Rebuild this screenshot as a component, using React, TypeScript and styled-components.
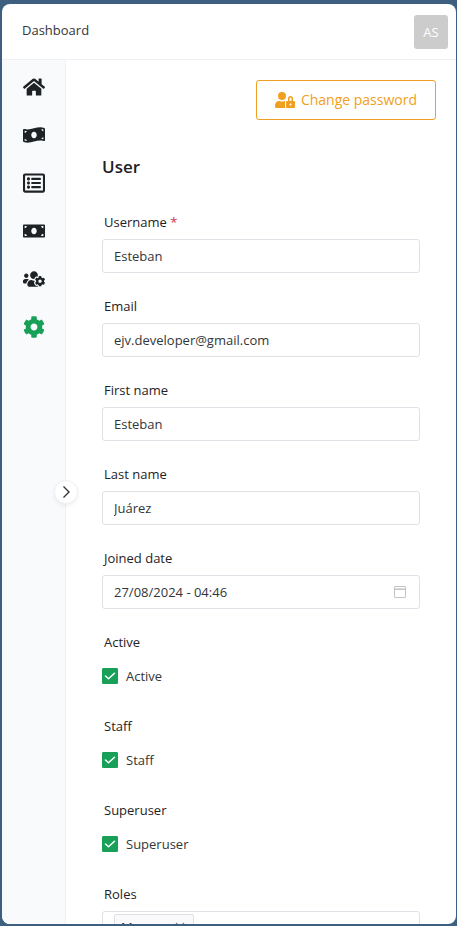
import React, { useId, useState } from 'react';
import styled, { createGlobalStyle, css } from 'styled-components';
import {
  FaCog,
  FaHome,
  FaMoneyBill,
  FaMoneyBillWave,
  FaRegListAlt,
  FaUserLock,
  FaUsersCog,
} from 'react-icons/fa';

const GlobalStyle = createGlobalStyle`
  *, *::before, *::after { box-sizing: border-box; }
  html, body, #root { height: 100%; }
  body {
    margin: 0;
    background: #3d6080;
    color: #1f2225;
    font-family: "Open Sans", "Noto Sans", sans-serif;
    font-size: 13px;
    line-height: 20px;
  }
  button, input { font: inherit; color: inherit; }
`;

const Backdrop = styled.div`
  height: 100vh;
  padding: 4px 1px 2px 2px;
`;

const Window = styled.div`
  display: flex;
  flex-direction: column;
  height: 100%;
  overflow: hidden;
  border-radius: 8px;
  background: #fff;
`;

const Header = styled.header`
  display: flex;
  flex: none;
  align-items: center;
  justify-content: space-between;
  height: 56px;
  padding: 0 8px 0 20px;
  border-bottom: 1px solid #efeff5;
`;

const Crumb = styled.a`
  margin-bottom: 4px;
  color: #333639;
  text-decoration: none;
`;

const Avatar = styled.button`
  width: 34px;
  height: 34px;
  padding: 0;
  border: 0;
  border-radius: 3px;
  background: #ccc;
  color: #fff;
`;

const Body = styled.div`
  display: flex;
  flex: 1;
  min-height: 0;
`;

const Sidebar = styled.aside`
  position: relative;
  flex: none;
  width: 64px;
  border-right: 1px solid #efeff5;
  background: #f8fafc;
`;

const Menu = styled.nav`
  display: flex;
  flex-direction: column;
  padding-top: 3px;
`;

const MenuLink = styled.a<{ $active?: boolean }>`
  display: flex;
  align-items: center;
  justify-content: center;
  height: 48px;
  color: ${({ $active }) => ($active ? '#18a058' : '#1f2225')};
  font-size: 22px;
`;

const CollapseToggle = styled.button`
  position: absolute;
  top: 50%;
  right: -1px;
  display: flex;
  align-items: center;
  justify-content: center;
  width: 24px;
  height: 24px;
  padding: 0;
  border: 1px solid #efeff5;
  border-radius: 50%;
  background: #fff;
  color: #333639;
  box-shadow: 0 2px 4px rgba(0, 0, 0, 0.06);
  transform: translate(50%, -50%);
`;

const Main = styled.main`
  display: flex;
  flex: 1;
  flex-direction: column;
  min-width: 0;
  padding: 20px;
  overflow: hidden;
`;

const PasswordButton = styled.button`
  display: flex;
  flex: none;
  align-items: center;
  align-self: flex-end;
  gap: 6px;
  height: 40px;
  padding: 0 18px;
  border: 1px solid #f0a020;
  border-radius: 3px;
  background: transparent;
  color: #f0a020;
  font-size: 14px;

  svg { font-size: 20px; }
`;

const Form = styled.form`
  flex: none;
  padding: 35px 16px 0;
`;

const Title = styled.h2`
  margin: 0 0 34px;
  font-size: 17px;
  font-weight: 600;
  line-height: 24px;
`;

const Field = styled.div`
  display: flex;
  flex-direction: column;
  height: 84px;
`;

const labelStyle = css`
  height: 26px;
  padding-left: 2px;
  line-height: 19px;
`;

const Label = styled.label`
  ${labelStyle}
`;

const GroupLabel = styled.div`
  ${labelStyle}
`;

const Asterisk = styled.span`
  color: #d03050;
`;

const Control = styled.div`
  display: flex;
  align-items: center;
  height: 34px;
  padding: 0 11px;
  border: 1px solid #e0e0e6;
  border-radius: 3px;
  color: #c2c2c2;
`;

const TextInput = styled.input`
  flex: 1;
  min-width: 0;
  height: 100%;
  padding: 0;
  border: 0;
  outline: 0;
  background: transparent;
  color: #333639;
`;

const CheckLabel = styled.label`
  display: flex;
  align-items: center;
  gap: 8px;
  height: 34px;
  color: #333639;
`;

const CheckBox = styled.span`
  display: grid;
  width: 16px;
  height: 16px;

  > * { grid-area: 1 / 1; }
  svg { pointer-events: none; }
`;

const CheckInput = styled.input`
  width: 16px;
  height: 16px;
  margin: 0;
  border: 1px solid #e0e0e6;
  border-radius: 1px;
  appearance: none;

  &:checked {
    border-color: #18a058;
    background: #18a058;
  }
`;

const TagBox = styled.div`
  display: flex;
  min-height: 34px;
  padding: 2px 11px;
  border: 1px solid #e0e0e6;
  border-radius: 3px;
`;

const Tag = styled.span`
  display: flex;
  align-items: center;
  justify-content: space-between;
  width: 80px;
  height: 26px;
  padding: 0 8px 0 6px;
  border: 1px solid #e0e0e6;
  border-radius: 2px;
  background: #fafafc;
  color: #333639;
`;

const TagClose = styled.button`
  display: flex;
  padding: 0;
  border: 0;
  background: transparent;
  color: #767c82;
`;

const ChevronIcon = () => (
  <svg width="14" height="14" viewBox="0 0 14 14" fill="none" stroke="currentColor" strokeWidth="1.4" aria-hidden="true">
    <path d="M4.5 1.5 10 7l-5.5 5.5" />
  </svg>
);

const CalendarIcon = () => (
  <svg width="16" height="16" viewBox="0 0 16 16" fill="none" stroke="currentColor" aria-hidden="true">
    <rect x="2.5" y="2.5" width="11" height="11" rx="0.5" />
    <path d="M2 5.2h12" strokeWidth="1.5" />
  </svg>
);

const CheckIcon = () => (
  <svg width="16" height="16" viewBox="0 0 16 16" fill="none" stroke="#fff" strokeWidth="1.5" strokeLinecap="round" strokeLinejoin="round" aria-hidden="true">
    <path d="M3.5 8 6.500 10.700l6-5.400" />
  </svg>
);

const CloseIcon = () => (
  <svg width="10" height="10" viewBox="0 0 10 10" stroke="currentColor" strokeWidth="1.2" aria-hidden="true">
    <path d="m1 1 8 8M9 1 1 9" />
  </svg>
);

interface TextFieldProps {
  label: string;
  value: string;
  type?: string;
  required?: boolean;
  suffix?: React.ReactNode;
}

function TextField({ label, value, type = 'text', required, suffix }: TextFieldProps) {
  const id = useId();
  return (
    <Field>
      <Label htmlFor={id}>
        {label}
        {required && <Asterisk> *</Asterisk>}
      </Label>
      <Control>
        <TextInput id={id} type={type} defaultValue={value} required={required} />
        {suffix}
      </Control>
    </Field>
  );
}

function CheckField({ label }: { label: string }) {
  const [checked, setChecked] = useState(true);
  return (
    <Field>
      <GroupLabel>{label}</GroupLabel>
      <CheckLabel>
        <CheckBox>
          <CheckInput type="checkbox" checked={checked} onChange={(e) => setChecked(e.target.checked)} />
          {checked && <CheckIcon />}
        </CheckBox>
        {label}
      </CheckLabel>
    </Field>
  );
}

const menu = [
  { name: 'Home', Icon: FaHome },
  { name: 'Payments', Icon: FaMoneyBillWave },
  { name: 'Lists', Icon: FaRegListAlt },
  { name: 'Cash', Icon: FaMoneyBill },
  { name: 'Users', Icon: FaUsersCog },
  { name: 'Settings', Icon: FaCog, active: true },
];

export default function App() {
  return (
    <>
      <GlobalStyle />
      <Backdrop>
        <Window>
          <Header>
            <Crumb href="#dashboard">Dashboard</Crumb>
            <Avatar type="button">AS</Avatar>
          </Header>
          <Body>
            <Sidebar>
              <Menu>
                {menu.map(({ name, Icon, active }) => (
                  <MenuLink key={name} href={`#${name.toLowerCase()}`} aria-label={name} $active={active}>
                    <Icon />
                  </MenuLink>
                ))}
              </Menu>
              <CollapseToggle type="button" aria-label="Expand menu">
                <ChevronIcon />
              </CollapseToggle>
            </Sidebar>
            <Main>
              <PasswordButton type="button">
                <FaUserLock />
                Change password
              </PasswordButton>
              <Form>
                <Title>User</Title>
                <TextField label="Username" value="Esteban" required />
                <TextField label="Email" value="ejv.developer@gmail.com" type="email" />
                <TextField label="First name" value="Esteban" />
                <TextField label="Last name" value="Juárez" />
                <TextField label="Joined date" value="27/08/2024 - 04:46" suffix={<CalendarIcon />} />
                <CheckField label="Active" />
                <CheckField label="Staff" />
                <CheckField label="Superuser" />
                <Field>
                  <GroupLabel>Roles</GroupLabel>
                  <TagBox>
                    <Tag>
                      Manager
                      <TagClose type="button" aria-label="Remove role">
                        <CloseIcon />
                      </TagClose>
                    </Tag>
                  </TagBox>
                </Field>
              </Form>
            </Main>
          </Body>
        </Window>
      </Backdrop>
    </>
  );
}
